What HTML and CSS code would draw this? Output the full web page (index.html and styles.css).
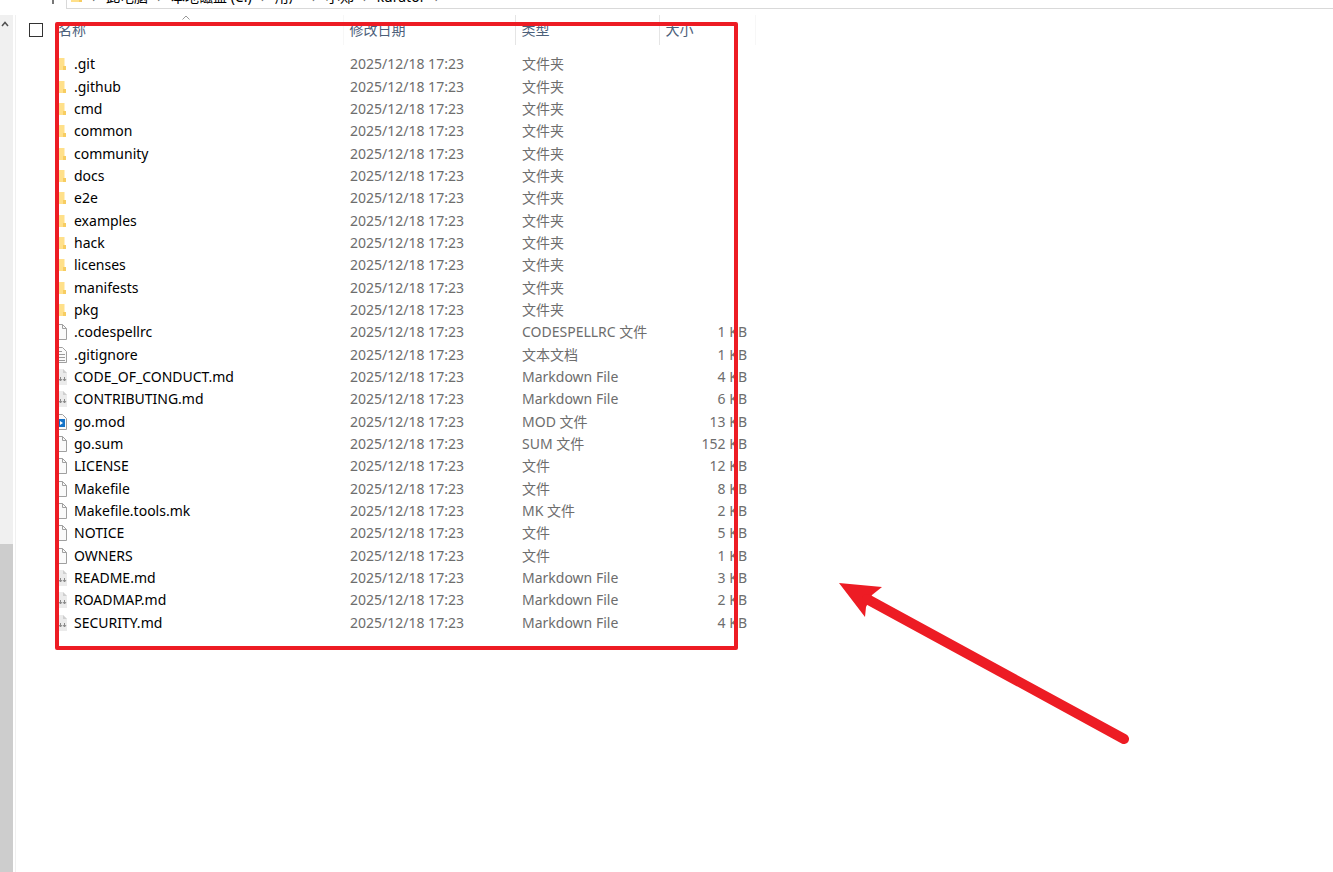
FILE: index.html
```html
<!DOCTYPE html>
<html lang="zh-CN">
<head>
  <meta charset="UTF-8">
  <meta name="viewport" content="width=device-width, initial-scale=1.0">
  <title>kurator</title>
  <link rel="stylesheet" href="styles.css">
</head>
<body>

<svg class="symbols" aria-hidden="true">
  <symbol id="folder" viewBox="0 0 12 16">
    <path d="M0 2h9.500v8h1.500v4H0z" fill="#ffe08a"/>
    <path d="M8 10h3v4H8z" fill="#f7cd62"/>
  </symbol>
  <symbol id="file" viewBox="0 0 12 16">
    <path d="M.5 .5h7l4 4v11H.5z" fill="#fafafa" stroke="#a0a0a0"/>
    <path d="M7.500 .5v4h4" fill="none" stroke="#a0a0a0"/>
  </symbol>
  <symbol id="text" viewBox="0 0 12 16">
    <path d="M.5 .5h7l4 4v11H.5z" fill="#fafafa" stroke="#a0a0a0"/>
    <path d="M2 4.500h5M2 7.500h8M2 10.500h8M2 13.500h8" stroke="#9a9a9a"/>
  </symbol>
  <symbol id="markdown" viewBox="0 0 12 16">
    <path d="M0 0h8l4 4v12H0z" fill="#ebebeb"/>
    <path d="M8 0v4h4z" fill="#cfcfcf"/>
    <path d="M5.500 8v4M4 10l1.500 2L7 10M9.500 8v4M8 10l1.500 2L11 10" fill="none" stroke="#8a8a8a"/>
  </symbol>
  <symbol id="media" viewBox="0 0 12 16">
    <path d="M.5 .5h7l4 4v11H.5z" fill="#fafafa" stroke="#a0a0a0"/>
    <path d="M0 5h10v8H0z" fill="#1473c8"/>
    <path d="M5 7l3 2-3 2z" fill="#fff"/>
  </symbol>
</svg>

<nav class="toolbar">
  <div class="buttons"><span class="tick"></span></div>
  <div class="address">
    <svg class="place" viewBox="0 0 12 16"><use href="#folder"/></svg>
    <span class="sep">›</span><a href="#">此电脑</a>
    <span class="sep">›</span><a href="#">本地磁盘 (C:)</a>
    <span class="sep">›</span><a href="#">用户</a>
    <span class="sep">›</span><a href="#">小郑</a>
    <span class="sep">›</span><a href="#">kurator</a>
    <span class="sep">›</span>
  </div>
</nav>

<main class="explorer">
  <div class="scrollbar">
    <div class="track">
      <svg class="up" viewBox="0 0 8 6"><path d="M1 5l3-3.500L7 5" fill="none" stroke="#505050" stroke-width="1.500"/></svg>
    </div>
    <div class="thumb"></div>
  </div>

  <div class="pane">
    <input type="checkbox" class="check" aria-label="全选">
    <table class="files">
      <colgroup><col class="c-name"><col class="c-date"><col class="c-type"><col class="c-size"></colgroup>
      <thead>
        <tr>
          <th>名称<svg class="sort" viewBox="0 0 8 5"><path d="M.5 4.500L4 1l3.500 3.500" fill="none" stroke="#999"/></svg></th>
          <th>修改日期</th>
          <th>类型</th>
          <th>大小</th>
        </tr>
      </thead>
      <tbody id="rows"></tbody>
    </table>
    <div class="frame"></div>
  </div>

  <svg class="arrow" viewBox="0 0 292 164">
    <path d="M0 0L43 4L33 12L27 24L26 34z" fill="#ed1c24"/>
    <path d="M28 16L285 156" stroke="#ed1c24" stroke-width="10" stroke-linecap="round"/>
  </svg>
</main>

<script>
  // name, icon, type, size
  const files = [
    ['.git', 'folder', '文件夹', ''],
    ['.github', 'folder', '文件夹', ''],
    ['cmd', 'folder', '文件夹', ''],
    ['common', 'folder', '文件夹', ''],
    ['community', 'folder', '文件夹', ''],
    ['docs', 'folder', '文件夹', ''],
    ['e2e', 'folder', '文件夹', ''],
    ['examples', 'folder', '文件夹', ''],
    ['hack', 'folder', '文件夹', ''],
    ['licenses', 'folder', '文件夹', ''],
    ['manifests', 'folder', '文件夹', ''],
    ['pkg', 'folder', '文件夹', ''],
    ['.codespellrc', 'file', 'CODESPELLRC 文件', '1 KB'],
    ['.gitignore', 'text', '文本文档', '1 KB'],
    ['CODE_OF_CONDUCT.md', 'markdown', 'Markdown File', '4 KB'],
    ['CONTRIBUTING.md', 'markdown', 'Markdown File', '6 KB'],
    ['go.mod', 'media', 'MOD 文件', '13 KB'],
    ['go.sum', 'file', 'SUM 文件', '152 KB'],
    ['LICENSE', 'file', '文件', '12 KB'],
    ['Makefile', 'file', '文件', '8 KB'],
    ['Makefile.tools.mk', 'file', 'MK 文件', '2 KB'],
    ['NOTICE', 'file', '文件', '5 KB'],
    ['OWNERS', 'file', '文件', '1 KB'],
    ['README.md', 'markdown', 'Markdown File', '3 KB'],
    ['ROADMAP.md', 'markdown', 'Markdown File', '2 KB'],
    ['SECURITY.md', 'markdown', 'Markdown File', '4 KB']
  ];

  document.getElementById('rows').innerHTML = files.map(([name, icon, type, size]) => `
    <tr>
      <td class="name"><div class="entry"><svg class="icon" viewBox="0 0 12 16"><use href="#${icon}"/></svg>${name}</div></td>
      <td>2025/12/18 17:23</td>
      <td>${type}</td>
      <td class="size">${size}</td>
    </tr>`).join('');
</script>
</body>
</html>
```

FILE: styles.css
```css
* {
  box-sizing: border-box;
}

body {
  margin: 0;
  height: 100vh;
  display: flex;
  flex-direction: column;
  overflow: hidden;
  background: #fff;
  color: #000;
  font: 14px/22px "Noto Sans", "Noto Sans CJK SC", sans-serif;
}

.symbols {
  display: none;
}

.toolbar {
  flex: none;
  display: flex;
  height: 9px;
  margin-bottom: 6px;
}

.buttons {
  width: 66px;
  padding-left: 52px;
}

.tick {
  display: block;
  width: 2px;
  height: 4px;
  background: #777;
}

.address {
  flex: 1;
  display: flex;
  align-items: flex-end;
  overflow: hidden;
  padding-left: 4px;
  border-left: 1px solid #d9d9d9;
  border-bottom: 1px solid #d9d9d9;
}

.address a {
  color: #000;
  text-decoration: none;
  white-space: nowrap;
}

.place {
  width: 12px;
  height: 16px;
  margin-bottom: 4px;
}

.sep {
  width: 23px;
  text-align: center;
  color: #666;
}

.explorer {
  position: relative;
  flex: 1;
  display: flex;
  min-height: 0;
}

.scrollbar {
  width: 13px;
  display: flex;
  flex-direction: column;
}

.track {
  flex: 529;
  background: #f0f0f0;
}

.thumb {
  flex: 328;
  background: #cdcdcd;
}

.up {
  display: block;
  width: 8px;
  height: 6px;
  margin: 6px 0 0 1px;
}

.pane {
  position: relative;
  flex: 1;
  display: flex;
  align-items: flex-start;
  margin-left: 2px;
  padding-left: 13px;
  border-left: 1px solid #f0f0f0;
}

.check {
  appearance: none;
  width: 14px;
  height: 14px;
  margin: 8px 12px 0 0;
  border: 1px solid #333;
  background: #fff;
}

.files {
  table-layout: fixed;
  width: 700px;
  border-collapse: collapse;
}

.c-name { width: 288px; }
.c-date { width: 172px; }
.c-type { width: 144px; }
.c-size { width: 96px; }

th {
  position: relative;
  height: 30px;
  padding: 0 0 0 6px;
  border-right: 1px solid #e5e5e5;
  color: #4c607a;
  font-weight: 400;
  text-align: left;
}

th:first-child {
  padding-left: 3px;
}

th:first-child,
th:last-child {
  border-right-color: #f7f7f7;
}

.sort {
  position: absolute;
  left: 127px;
  top: 0;
  width: 8px;
  height: 5px;
}

tbody::before {
  content: "";
  display: block;
  height: 8px;
}

td {
  height: 22px;
  padding: 0 0 0 7px;
  color: #6d6d6d;
  white-space: nowrap;
}

tr:nth-child(3n + 2) td {
  height: 23px;
}

.name {
  padding-left: 0;
  color: #000;
}

.entry {
  display: flex;
  align-items: center;
  gap: 7px;
}

.icon {
  width: 12px;
  height: 16px;
}

.size {
  padding: 0 8px 0 0;
  text-align: right;
}

/* red highlight round the list */
.frame {
  position: absolute;
  left: 39px;
  top: 7px;
  width: 683px;
  height: 628px;
  border: 4px solid #ed1c24;
  border-radius: 2px;
}

.arrow {
  position: absolute;
  left: 839px;
  top: 568px;
  width: 292px;
  height: 164px;
}
```
